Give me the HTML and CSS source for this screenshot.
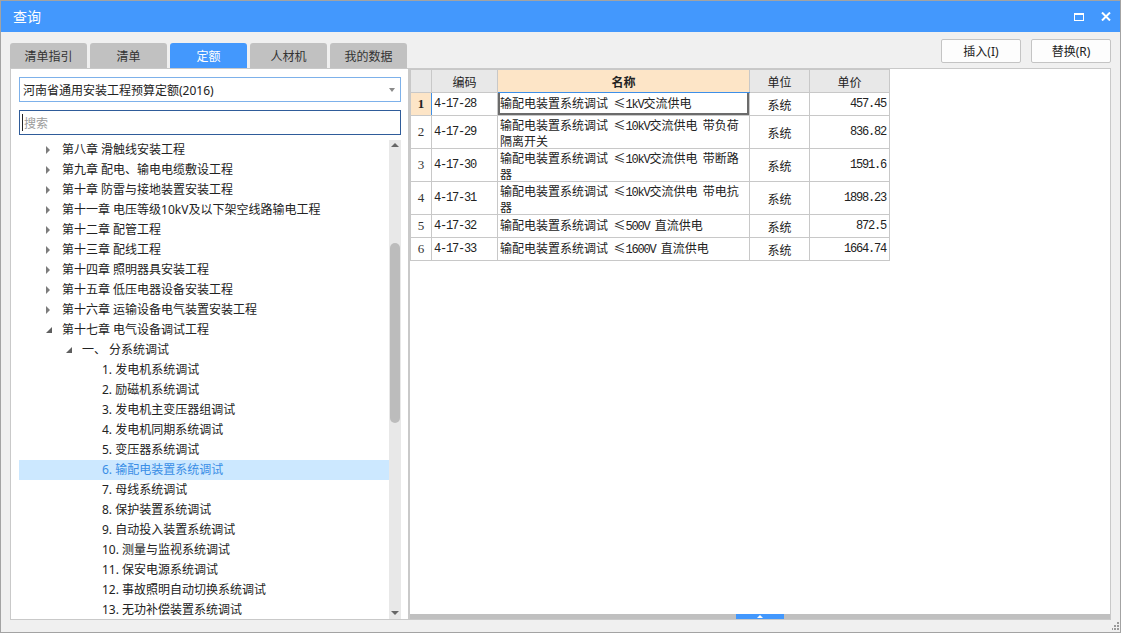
FILE: index.html
```html
<!DOCTYPE html>
<html lang="zh-CN">
<head>
<meta charset="utf-8">
<title>查询</title>
<link rel="stylesheet" href="styles.css">
</head>
<body>
<div class="window">
  <header class="titlebar">
    <span class="title">查询</span>
    <div class="win-btns">
      <svg class="ic" width="10" height="8" viewBox="0 0 10 8"><rect x="0.5" y="0.5" width="9" height="7" fill="none" stroke="#fff" stroke-width="1"/><rect x="0" y="0" width="10" height="2" fill="#fff"/></svg>
      <svg class="ic" width="10" height="9" viewBox="0 0 10 9"><path d="M1 0.5L9 8.5M9 0.5L1 8.5" stroke="#fff" stroke-width="2" fill="none"/></svg>
    </div>
  </header>
  <div class="content">
    <section class="left-col">
      <nav class="tabs">
        <span class="tab">清单指引</span>
        <span class="tab">清单</span>
        <span class="tab active">定额</span>
        <span class="tab">人材机</span>
        <span class="tab">我的数据</span>
      </nav>
      <div class="panel left-panel">
        <div class="select">
          <span class="select-text">河南省通用安装工程预算定额(2016)</span>
          <span class="caret"></span>
        </div>
        <div class="search">
          <span class="cursor"></span>
          <span class="placeholder">搜索</span>
        </div>
        <div class="tree-wrap">
          <ul class="tree">
            <li class="row l1"><span class="tw"><i class="tri-r"></i></span>第八章 滑触线安装工程</li>
            <li class="row l1"><span class="tw"><i class="tri-r"></i></span>第九章 配电、输电电缆敷设工程</li>
            <li class="row l1"><span class="tw"><i class="tri-r"></i></span>第十章 防雷与接地装置安装工程</li>
            <li class="row l1"><span class="tw"><i class="tri-r"></i></span>第十一章 电压等级10kV及以下架空线路输电工程</li>
            <li class="row l1"><span class="tw"><i class="tri-r"></i></span>第十二章 配管工程</li>
            <li class="row l1"><span class="tw"><i class="tri-r"></i></span>第十三章 配线工程</li>
            <li class="row l1"><span class="tw"><i class="tri-r"></i></span>第十四章 照明器具安装工程</li>
            <li class="row l1"><span class="tw"><i class="tri-r"></i></span>第十五章 低压电器设备安装工程</li>
            <li class="row l1"><span class="tw"><i class="tri-r"></i></span>第十六章 运输设备电气装置安装工程</li>
            <li class="row l1"><span class="tw"><i class="tri-d"></i></span>第十七章 电气设备调试工程</li>
            <li class="row l2"><span class="tw"><i class="tri-d"></i></span>一、 分系统调试</li>
            <li class="row l3">1. 发电机系统调试</li>
            <li class="row l3">2. 励磁机系统调试</li>
            <li class="row l3">3. 发电机主变压器组调试</li>
            <li class="row l3">4. 发电机同期系统调试</li>
            <li class="row l3">5. 变压器系统调试</li>
            <li class="row l3 selected">6. 输配电装置系统调试</li>
            <li class="row l3">7. 母线系统调试</li>
            <li class="row l3">8. 保护装置系统调试</li>
            <li class="row l3">9. 自动投入装置系统调试</li>
            <li class="row l3">10. 测量与监视系统调试</li>
            <li class="row l3">11. 保安电源系统调试</li>
            <li class="row l3">12. 事故照明自动切换系统调试</li>
            <li class="row l3">13. 无功补偿装置系统调试</li>
          </ul>
          <div class="vscroll">
            <span class="sarrow up"></span>
            <span class="thumb"></span>
            <span class="sarrow down"></span>
          </div>
        </div>
      </div>
    </section>
    <section class="right-col">
      <div class="actions">
        <button class="btn">插入(I)</button>
        <button class="btn">替换(R)</button>
      </div>
      <div class="panel right-panel">
        <table class="grid">
          <colgroup>
            <col class="c-no"><col class="c-code"><col class="c-name"><col class="c-unit"><col class="c-price">
          </colgroup>
          <thead>
            <tr class="h23">
              <th></th>
              <th>编码</th>
              <th class="cur">名称</th>
              <th>单位</th>
              <th>单价</th>
            </tr>
          </thead>
          <tbody>
            <tr class="h23">
              <td class="no rowcur">1</td>
              <td class="code">4-17-28</td>
              <td class="name focus">输配电装置系统调试&nbsp; ≤<span class="mono">1kV</span>交流供电</td>
              <td class="unit">系统</td>
              <td class="price">457.45</td>
            </tr>
            <tr class="h33">
              <td class="no">2</td>
              <td class="code">4-17-29</td>
              <td class="name">输配电装置系统调试&nbsp; ≤<span class="mono">10kV</span>交流供电&nbsp; 带负荷<br>隔离开关</td>
              <td class="unit">系统</td>
              <td class="price">836.82</td>
            </tr>
            <tr class="h33">
              <td class="no">3</td>
              <td class="code">4-17-30</td>
              <td class="name">输配电装置系统调试&nbsp; ≤<span class="mono">10kV</span>交流供电&nbsp; 带断路<br>器</td>
              <td class="unit">系统</td>
              <td class="price">1591.6</td>
            </tr>
            <tr class="h33">
              <td class="no">4</td>
              <td class="code">4-17-31</td>
              <td class="name">输配电装置系统调试&nbsp; ≤<span class="mono">10kV</span>交流供电&nbsp; 带电抗<br>器</td>
              <td class="unit">系统</td>
              <td class="price">1898.23</td>
            </tr>
            <tr class="h23">
              <td class="no">5</td>
              <td class="code">4-17-32</td>
              <td class="name">输配电装置系统调试&nbsp; ≤<span class="mono">500V</span>&nbsp; 直流供电</td>
              <td class="unit">系统</td>
              <td class="price">872.5</td>
            </tr>
            <tr class="h23">
              <td class="no">6</td>
              <td class="code">4-17-33</td>
              <td class="name">输配电装置系统调试&nbsp; ≤<span class="mono">1600V</span>&nbsp; 直流供电</td>
              <td class="unit">系统</td>
              <td class="price">1664.74</td>
            </tr>
          </tbody>
        </table>
        <div class="hbar"><span class="handle"><i class="tri-up"></i></span></div>
      </div>
    </section>
  </div>
  <svg class="grip" width="7" height="8" viewBox="0 0 7 8">
    <rect x="5" y="0" width="2" height="2" fill="#9a9a9a"/>
    <rect x="5" y="3" width="2" height="2" fill="#9a9a9a"/>
    <rect x="2" y="3" width="2" height="2" fill="#9a9a9a"/>
    <rect x="5" y="6" width="2" height="2" fill="#9a9a9a"/>
    <rect x="2" y="6" width="2" height="2" fill="#9a9a9a"/>
    <rect x="-1" y="6" width="2" height="2" fill="#9a9a9a"/>
  </svg>
</div>
</body>
</html>
```

FILE: styles.css
```css
* { box-sizing: border-box; }
html, body { margin: 0; padding: 0; background: #fff; }
body {
  font-family: "Noto Sans", "Noto Sans CJK SC", sans-serif;
  font-size: 12px;
  color: #222;
}
.window {
  position: relative;
  width: 1121px;
  height: 633px;
  border: 1px solid #a3a3a3;
  background: #f0f0f0;
  display: flex;
  flex-direction: column;
}
.titlebar {
  flex: none;
  height: 31px;
  background: #4398fd;
  color: #fff;
  display: flex;
  align-items: center;
  justify-content: space-between;
  padding: 0 9px 0 12px;
}
.title { font-size: 14px; line-height: 31px; font-family: "Noto Sans CJK SC", sans-serif; }
.win-btns { display: flex; align-items: center; gap: 17px; }
.ic { display: block; }

.content {
  flex: 1;
  min-height: 0;
  display: flex;
  padding: 0 9px 12px 9px;
}
.left-col {
  width: 399px;
  flex: none;
  display: flex;
  flex-direction: column;
  padding-top: 11px;
}
.tabs { display: flex; gap: 3px; height: 25px; flex: none; }
.tab {
  width: 77px;
  background: #c1c1c1;
  border-radius: 3px 3px 0 0;
  text-align: center;
  line-height: 25px;
  font-size: 12px;
  color: #333;
  font-family: "Noto Sans CJK SC", sans-serif;
}
.tab.active { background: #4398fd; color: #fff; }

.panel { background: #fff; border: 1px solid #c9c9c9; }
.left-panel {
  flex: 1;
  min-height: 0;
  display: flex;
  flex-direction: column;
  padding: 8px 7px 0 8px;
}
.select {
  flex: none;
  height: 25px;
  border: 1px solid #7db1ea;
  display: flex;
  align-items: center;
  padding-left: 3px;
}
.select-text { font-size: 12px; color: #222; }
.caret {
  margin-left: auto;
  margin-right: 5px;
  width: 0; height: 0;
  border-top: 4px solid #8a8a8a;
  border-left: 3px solid transparent;
  border-right: 3px solid transparent;
}
.search {
  flex: none;
  margin-top: 8px;
  height: 25px;
  border: 1px solid #2f5c9a;
  display: flex;
  align-items: center;
  padding-left: 2px;
}
.cursor { width: 1px; height: 17px; background: #222; }
.placeholder { color: #9b9b9b; font-size: 12px; margin-left: 1px; font-family: "Noto Sans CJK SC", sans-serif; }

.tree-wrap {
  flex: 1;
  min-height: 0;
  margin-top: 5px;
  display: flex;
  overflow: hidden;
}
.tree {
  flex: 1;
  list-style: none;
  margin: 0;
  padding: 0;
  overflow: hidden;
}
.row {
  height: 20px;
  line-height: 20px;
  display: flex;
  align-items: center;
  white-space: nowrap;
  color: #222;
}
.row.l1 { padding-left: 26px; }
.row.l2 { padding-left: 46px; }
.row.l3 { padding-left: 83px; }
.row.selected { background: #cce8ff; color: #3a8ee6; }
.tw { width: 17px; height: 20px; flex: none; position: relative; }
.tri-r {
  position: absolute;
  left: 1px; top: 6px;
  width: 0; height: 0;
  border-left: 4px solid #7c7c7c;
  border-top: 4px solid transparent;
  border-bottom: 4px solid transparent;
}
.tri-d {
  position: absolute;
  left: 1px; top: 7px;
  width: 0; height: 0;
  border-bottom: 6px solid #5f5f5f;
  border-left: 6px solid transparent;
}
.vscroll {
  width: 12px;
  flex: none;
  background: #e8e8e8;
  display: flex;
  flex-direction: column;
  align-items: center;
}
.sarrow { width: 0; height: 0; border-left: 4px solid transparent; border-right: 4px solid transparent; }
.sarrow.up { margin-top: 3px; border-bottom: 4px solid #666; }
.sarrow.down { margin-top: auto; margin-bottom: 4px; border-top: 4px solid #666; }
.thumb {
  margin-top: 96px;
  width: 10px;
  height: 180px;
  border-radius: 5px;
  background: #bcbcbc;
}

.right-col {
  flex: 1;
  min-width: 0;
  display: flex;
  flex-direction: column;
  padding-top: 7px;
}
.actions { display: flex; justify-content: flex-end; gap: 10px; height: 24px; flex: none; }
.btn {
  width: 80px;
  height: 24px;
  background: #fdfdfd;
  border: 1px solid #c4c4c4;
  border-radius: 2px;
  font-family: "Noto Sans", "Noto Sans CJK SC", sans-serif;
  font-size: 12px;
  color: #222;
  padding: 0;
}
.right-panel {
  margin-top: 5px;
  flex: 1;
  min-height: 0;
  display: flex;
  flex-direction: column;
}
.grid {
  border-collapse: collapse;
  table-layout: fixed;
  width: 480px;
  font-size: 12px;
}
.c-no { width: 21px; }
.c-code { width: 66px; }
.c-name { width: 252px; }
.c-unit { width: 60px; }
.c-price { width: 80px; }
.grid th, .grid td {
  border: 1px solid #c8c8c8;
  padding: 0 2px;
  vertical-align: middle;
  overflow: hidden;
  white-space: nowrap;
  font-family: "Noto Sans CJK SC", sans-serif;
}
.grid th { background: #e8e8e8; font-weight: normal; color: #222; text-align: center; }
.grid th.cur { background: #fde5c7; font-weight: bold; border-bottom: 1px solid #3d8fe8; }
.h23 { height: 23px; }
.h33 { height: 33px; }
.grid td.no {
  background: #fff;
  text-align: center;
  font-family: "Liberation Serif", serif;
  font-size: 13px;
  padding: 0;
  color: #333;
}
.grid td.no.rowcur { background: #fde5c7; font-weight: bold; border-right: 1px solid #3d8fe8; color: #222; }
.grid td.code, .grid td.price {
  font-family: "Liberation Mono", monospace;
  font-size: 12px;
  letter-spacing: -1.2px;
}
.grid td.price { text-align: right; padding-right: 3px; }
.grid td.name { white-space: normal; line-height: 13px; word-break: keep-all; }
.grid td.focus { box-shadow: inset 2px 0 #6b6b6b, inset -2px 0 #6b6b6b, inset 0 -2px #6b6b6b; }
.grid td.unit { text-align: center; }
.mono { font-family: "Liberation Mono", monospace; font-size: 12px; letter-spacing: -1.2px; }

.hbar {
  margin-top: auto;
  height: 5px;
  background: #c0c0c0;
  display: flex;
  justify-content: center;
  flex: none;
}
.handle {
  width: 48px;
  height: 5px;
  background: #4398fd;
  display: flex;
  justify-content: center;
  align-items: center;
}
.tri-up {
  width: 0; height: 0;
  border-left: 3px solid transparent;
  border-right: 3px solid transparent;
  border-bottom: 3px solid #fff;
}
.grip { position: absolute; right: 1px; bottom: 2px; }
```
